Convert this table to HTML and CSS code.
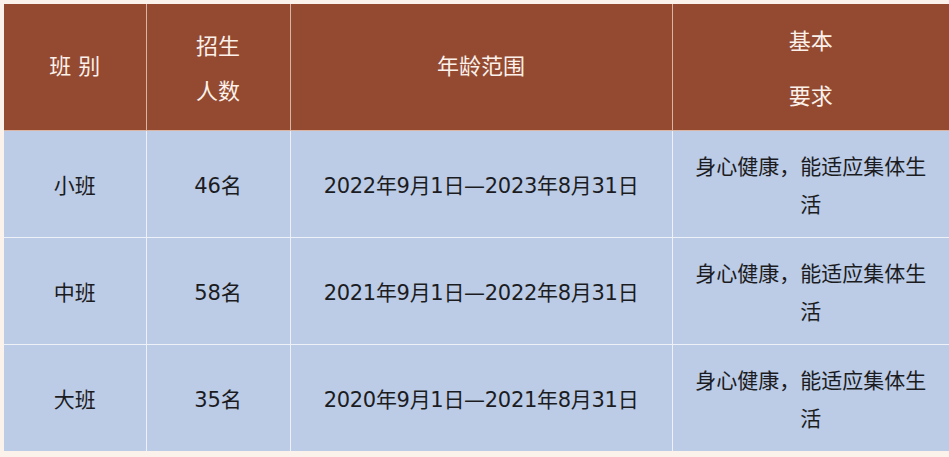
FILE: index.html
```html
<!DOCTYPE html>
<html lang="zh-CN">
<head>
<meta charset="utf-8">
<link rel="stylesheet" href="styles.css">
</head>
<body>
<table class="enroll">
  <colgroup>
    <col class="c1"><col class="c2"><col class="c3"><col class="c4">
  </colgroup>
  <thead>
    <tr class="head">
      <th>班 别</th>
      <th class="two">招生<br>人数</th>
      <th>年龄范围</th>
      <th class="two wide">基本<br>要求</th>
    </tr>
  </thead>
  <tbody>
    <tr class="row">
      <td>小班</td>
      <td>46名</td>
      <td class="date">2022年9月1日—2023年8月31日</td>
      <td class="req">身心健康，能适应集体生活</td>
    </tr>
    <tr class="row">
      <td>中班</td>
      <td>58名</td>
      <td class="date">2021年9月1日—2022年8月31日</td>
      <td class="req">身心健康，能适应集体生活</td>
    </tr>
    <tr class="row">
      <td>大班</td>
      <td>35名</td>
      <td class="date">2020年9月1日—2021年8月31日</td>
      <td class="req">身心健康，能适应集体生活</td>
    </tr>
  </tbody>
</table>
</body>
</html>
```
FILE: styles.css
```css
html, body {
  margin: 0;
  padding: 0;
  background: #fbf2ec;
  overflow: hidden;
}
body {
  padding: 4px 0 0 4px;
  font-family: "DejaVu Sans", "Noto Sans CJK SC", sans-serif;
}
.enroll {
  border-collapse: collapse;
  table-layout: fixed;
  width: 945px;
}
.c1 { width: 142px; }
.c2 { width: 144px; }
.c3 { width: 382px; }
.c4 { width: 277px; }
.enroll th, .enroll td {
  padding: 0;
  text-align: center;
  vertical-align: middle;
  font-size: 21px;
  font-weight: normal;
  border: 1px solid #eef1f8;
}
.enroll thead th {
  border-top: none;
}
.enroll th:first-child, .enroll td:first-child {
  border-left: none;
}
.enroll th:last-child, .enroll td:last-child {
  border-right: none;
}
.enroll tbody tr:last-child td {
  border-bottom: none;
}
.head {
  height: 126px;
}
.head th {
  background: #934a31;
  color: #fbf1ea;
  border-color: #d9b5a6;
  font-size: 22px;
  line-height: 30px;
}
.head th.two {
  line-height: 45px;
  padding-top: 4px;
}
.head th.wide {
  line-height: 55px;
}
.row {
  height: 107px;
}
.row td {
  background: #bccbe6;
  color: #1b1c22;
  line-height: 30px;
  padding-top: 5px;
}
.row td.date {
  letter-spacing: -0.3px;
}
.row td.req {
  line-height: 38px;
  padding: 4px 21px 0 21px;
}
```
